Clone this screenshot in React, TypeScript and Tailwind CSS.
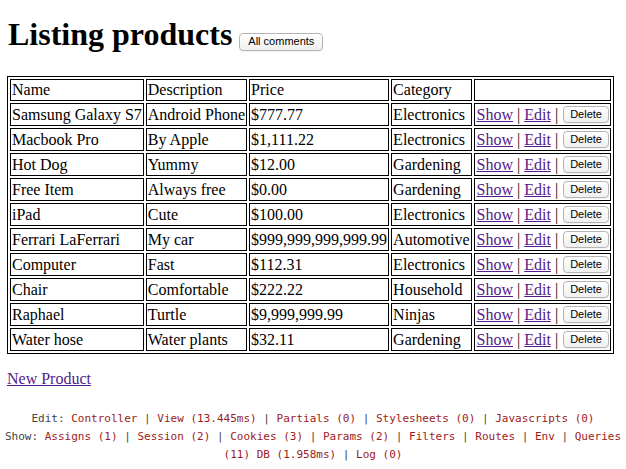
import React from "react";

const products = [
  ["Samsung Galaxy S7", "Android Phone", "$777.77", "Electronics"],
  ["Macbook Pro", "By Apple", "$1,111.22", "Electronics"],
  ["Hot Dog", "Yummy", "$12.00", "Gardening"],
  ["Free Item", "Always free", "$0.00", "Gardening"],
  ["iPad", "Cute", "$100.00", "Electronics"],
  ["Ferrari LaFerrari", "My car", "$999,999,999,999.99", "Automotive"],
  ["Computer", "Fast", "$112.31", "Electronics"],
  ["Chair", "Comfortable", "$222.22", "Household"],
  ["Raphael", "Turtle", "$9,999,999.99", "Ninjas"],
  ["Water hose", "Water plants", "$32.11", "Gardening"],
];

function SmallButton({ children, className = "" }: { children: React.ReactNode; className?: string }) {
  return (
    <span
      className={
        "inline-flex items-center justify-center rounded-[4px] border border-[#b5b5b5] bg-gradient-to-b from-white to-[#f0f0f0] text-[11px] font-normal leading-none text-black shadow-[0_1px_0_rgba(0,0,0,0.05)] " +
        className
      }
      style={{ fontFamily: '"Liberation Sans", Arial, sans-serif' }}
    >
      {children}
    </span>
  );
}

export default function App() {
  const cell = "border border-black p-px align-middle whitespace-nowrap text-left font-normal";
  const link = "text-[#9b1b1b]";
  return (
    <div
      className="bg-white text-black text-[16px]"
      style={{ fontFamily: '"Liberation Serif", "Times New Roman", serif' }}
    >
      <div className="px-[7px] pt-[16px]">
        <h1 className="flex items-baseline pl-px text-[32px] font-bold leading-[36px]">
          <span>Listing products</span>
          <SmallButton className="ml-[7px] h-[18px] w-[84px]">All comments</SmallButton>
        </h1>

        <table className="mt-[24px] border-separate border-spacing-[2px] border border-black">
          <thead>
            <tr>
              <th className={cell + " h-[22px] leading-[18px]"}>Name</th>
              <th className={cell + " leading-[18px]"}>Description</th>
              <th className={cell + " leading-[18px]"}>Price</th>
              <th className={cell + " leading-[18px]"}>Category</th>
              <th className={cell}></th>
            </tr>
          </thead>
          <tbody>
            {products.map((p, i) => (
              <tr key={i}>
                {p.map((v, j) => (
                  <td key={j} className={cell + " h-[23px] leading-[18px]"}>
                    {v}
                  </td>
                ))}
                <td className={cell + " h-[23px] leading-[18px] pl-[2px]"}>
                  <span className="inline-flex items-center">
                    <a href="#" className="text-[#551a8b] underline">Show</a>
                    <span className="whitespace-pre"> | </span>
                    <a href="#" className="text-[#551a8b] underline">Edit</a>
                    <span className="whitespace-pre"> | </span>
                    <SmallButton className="ml-[1px] h-[17px] w-[46px]">Delete</SmallButton>
                  </span>
                </td>
              </tr>
            ))}
          </tbody>
        </table>

        <div className="mt-[16px] leading-[18px]">
          <a href="#" className="text-[#551a8b] underline">New Product</a>
        </div>
      </div>

      <div
        className="mt-[22px] text-center text-[11px] leading-[18px] text-[#444]"
        style={{ fontFamily: '"DejaVu Sans Mono", "Liberation Mono", monospace' }}
      >
        <div>
          Edit: <a className={link} href="#">Controller</a> |{" "}
          <a className={link} href="#">View (13.445ms)</a> |{" "}
          <a className={link} href="#">Partials (0)</a> |{" "}
          <a className={link} href="#">Stylesheets (0)</a> |{" "}
          <a className={link} href="#">Javascripts (0)</a>
        </div>
        <div>
          Show: <a className={link} href="#">Assigns (1)</a> |{" "}
          <a className={link} href="#">Session (2)</a> |{" "}
          <a className={link} href="#">Cookies (3)</a> |{" "}
          <a className={link} href="#">Params (2)</a> |{" "}
          <a className={link} href="#">Filters</a> |{" "}
          <a className={link} href="#">Routes</a> |{" "}
          <a className={link} href="#">Env</a> |{" "}
          <a className={link} href="#">Queries (11) DB (1.958ms)</a> |{" "}
          <a className={link} href="#">Log (0)</a>
        </div>
      </div>
    </div>
  );
}
